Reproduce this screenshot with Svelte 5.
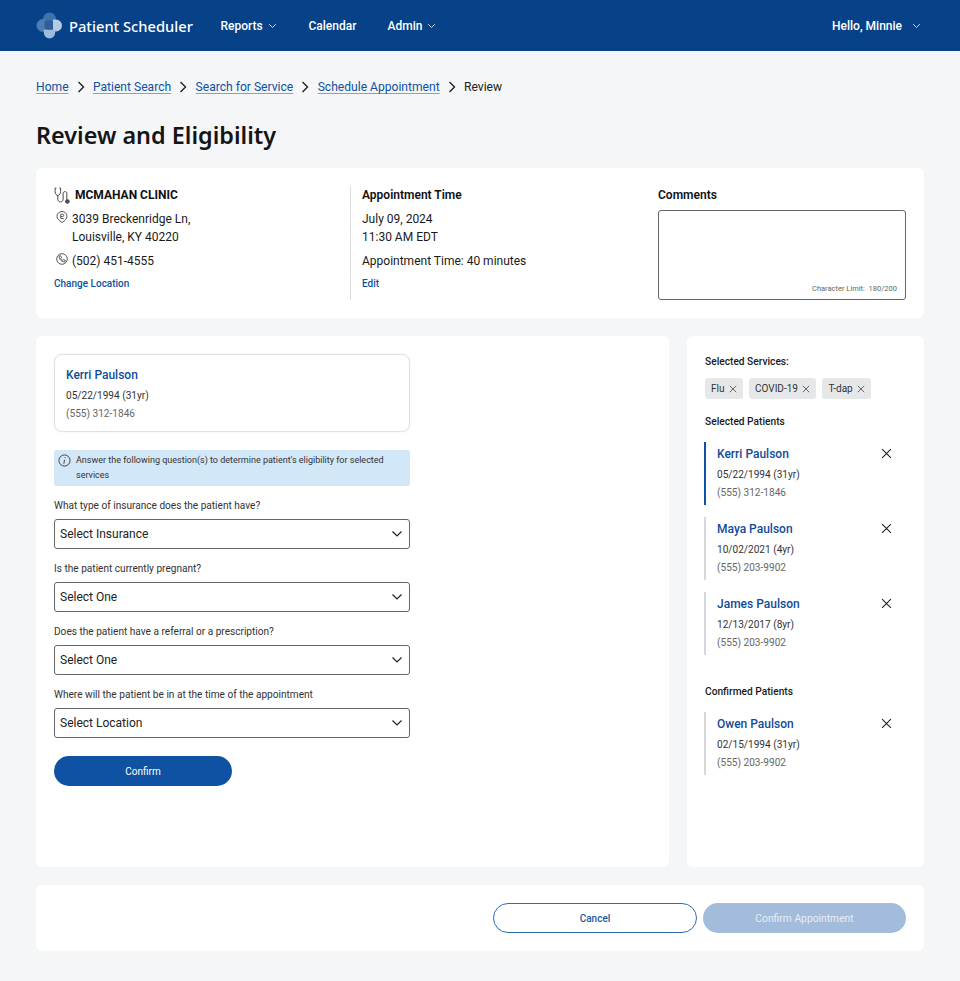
<script>
  const crumbs = ['Home', 'Patient Search', 'Search for Service', 'Schedule Appointment'];
  const questions = [
    ['What type of insurance does the patient have?', 'Select Insurance'],
    ['Is the patient currently pregnant?', 'Select One'],
    ['Does the patient have a referral or a prescription?', 'Select One'],
    ['Where will the patient be in at the time of the appointment', 'Select Location']
  ];
  const services = ['Flu', 'COVID-19', 'T-dap'];
  const selected = [
    { name: 'Kerri Paulson', dob: '05/22/1994 (31yr)', phone: '(555) 312-1846', active: true },
    { name: 'Maya Paulson', dob: '10/02/2021 (4yr)', phone: '(555) 203-9902' },
    { name: 'James Paulson', dob: '12/13/2017 (8yr)', phone: '(555) 203-9902' }
  ];
  const confirmed = [{ name: 'Owen Paulson', dob: '02/15/1994 (31yr)', phone: '(555) 203-9902' }];
</script>

{#snippet chevron(cls)}
  <svg class={cls} viewBox="0 0 12 8" fill="none" stroke="currentColor" stroke-width="1.2"><path d="M1.5 1.5 6 6l4.5-4.5" /></svg>
{/snippet}

{#snippet cross(cls)}
  <svg class={cls} viewBox="0 0 10 10" fill="none" stroke="currentColor" stroke-width="1"><path d="M1 1l8 8M9 1 1 9" /></svg>
{/snippet}

{#snippet person(p)}
  <div class="person" class:active={p.active}>
    <div class="person-text">
      <div class="pname">{p.name}</div>
      <div class="pdob">{p.dob}</div>
      <div class="pphone">{p.phone}</div>
    </div>
    {@render cross('person-x')}
  </div>
{/snippet}

<header class="topbar">
  <div class="brand">
    <svg class="logo" viewBox="0 0 27 27">
      <defs>
        <pattern id="dots" width="2" height="2" patternUnits="userSpaceOnUse"><rect width="2" height="2" fill="#1c4f8e" /><circle cx="1" cy="1" r=".55" fill="#6f97c6" /></pattern>
      </defs>
      <circle cx="13.5" cy="7" r="6.5" fill="#3e72ad" />
      <circle cx="7" cy="13.5" r="6.5" fill="#4c7db5" />
      <path d="M17 7.600h3a6 6 0 0 1 0 12h-3Z" fill="#b4cbe4" />
      <path d="M7.800 17.500h11.400v3a5.700 6 0 0 1-11.400 0Z" fill="#9dbcde" />
      <rect x="8.500" y="8.500" width="8.500" height="9" rx="2" fill="url(#dots)" />
    </svg>
    <span class="brand-name">Patient Scheduler</span>
  </div>
  <nav class="nav">
    <span class="nav-item reports">Reports {@render chevron('nav-chev')}</span>
    <span class="nav-item calendar">Calendar</span>
    <span class="nav-item">Admin {@render chevron('nav-chev')}</span>
  </nav>
  <div class="hello">Hello, Minnie {@render chevron('hello-chev')}</div>
</header>

<main class="page">
  <nav class="crumbs">
    {#each crumbs as c}
      <a href="#top" class="crumb">{c}</a>
      <svg class="crumb-sep" viewBox="0 0 8 12" fill="none" stroke="currentColor" stroke-width="1.4"><path d="M1.5 1 6.5 6l-5 5" /></svg>
    {/each}
    <span class="crumb-cur">Review</span>
  </nav>

  <h1 class="title">Review and Eligibility</h1>

  <section class="card summary">
    <div class="col col-loc">
      <div class="clinic">
        <svg class="ico-steth" viewBox="0 0 16 16" fill="none" stroke="#333" stroke-width=".85"><path d="M2.200 1H1v3.200C1 6.500 2.500 8 3.600 8S6.200 6.500 6.200 4.200V1H5" /><path d="M3.600 8v3.500c0 3.300 5 3.300 5 0V6c0-2.200 3.500-2.200 3.500 0v6" /><circle cx="12.600" cy="13.600" r="1.700" fill="#555" /></svg>
        <strong>MCMAHAN CLINIC</strong>
      </div>
      <div class="addr">
        <svg class="ico" viewBox="0 0 12 12" fill="none" stroke="#333" stroke-width=".8"><path d="M6 11.500C3 9.800 1 7.800 1 5.200a5 4.700 0 0 1 10 0C11 7.800 9 9.800 6 11.500Z" /><path d="M4.700 3.200h1.800a1.100 1.100 0 0 1 0 2.400H4.700m0-2.400v4l3 .5" /></svg>
        <div>3039 Breckenridge Ln,<br />Louisville, KY 40220</div>
      </div>
      <div class="tel">
        <svg class="ico" viewBox="0 0 12 12" fill="none" stroke="#333" stroke-width=".8"><circle cx="6" cy="6" r="5.300" /><path d="M3.200 3 4.700 2.700l.8 1.700-.8.9c.4.900 1.100 1.600 2 2l.9-.8 1.700.8L9 8.800C6 9.300 2.700 6 3.200 3Z" /></svg>
        (502) 451-4555
      </div>
      <a href="#top" class="small-link">Change Location</a>
    </div>
    <div class="col col-time">
      <h3 class="col-h">Appointment Time</h3>
      <div class="time-lines">July 09, 2024<br />11:30 AM EDT</div>
      <div class="duration">Appointment Time: 40 minutes</div>
      <a href="#top" class="small-link">Edit</a>
    </div>
    <div class="col col-comments">
      <h3 class="col-h">Comments</h3>
      <div class="comment-box"><span class="limit">Character Limit:&nbsp; 180/200</span></div>
    </div>
  </section>

  <div class="split">
    <section class="card form">
      <div class="pcard">
        <div class="pname">Kerri Paulson</div>
        <div class="pdob">05/22/1994 (31yr)</div>
        <div class="pphone">(555) 312-1846</div>
      </div>
      <div class="notice">
        <svg class="info" viewBox="0 0 14 14" fill="none" stroke="#222" stroke-width=".9"><circle cx="7" cy="7" r="6" /><path d="M7.600 3.500v1M7 6.200 6.300 10.500" /></svg>
        <p>Answer the following question(s) to determine patient's eligibility for selected services</p>
      </div>
      {#each questions as q}
        <div class="field">
          <div class="qlabel">{q[0]}</div>
          <div class="select"><span>{q[1]}</span>{@render chevron('select-chev')}</div>
        </div>
      {/each}
      <button class="btn-primary">Confirm</button>
    </section>

    <aside class="card side">
      <h4 class="side-h">Selected Services:</h4>
      <div class="chips">
        {#each services as s}
          <span class="chip">{s} {@render cross('chip-x')}</span>
        {/each}
      </div>
      <h4 class="side-h patients-h">Selected Patients</h4>
      <div class="people">
        {#each selected as p}
          {@render person(p)}
        {/each}
      </div>
      <h4 class="side-h confirmed-h">Confirmed Patients</h4>
      <div class="people">
        {#each confirmed as p}
          {@render person(p)}
        {/each}
      </div>
    </aside>
  </div>

  <section class="card footer">
    <button class="btn-outline">Cancel</button>
    <button class="btn-disabled">Confirm Appointment</button>
  </section>
</main>

<style>
  :global(body) {
    margin: 0;
    background: #f4f6f8;
    font-family: Roboto, "Liberation Sans", sans-serif;
    color: #1a1a1a;
  }
  .topbar {
    height: 51px;
    background: #074187;
    color: #fff;
    display: flex;
    align-items: center;
    padding: 0 36px;
    box-sizing: border-box;
  }
  .brand { display: flex; align-items: center; gap: 6px; width: 184.500px; }
  .logo { width: 27px; height: 27px; flex: none; }
  .brand-name { font-family: "Noto Sans", sans-serif; font-size: 14.700px; font-weight: 500; white-space: nowrap; }
  .nav { display: flex; align-items: center; font-size: 12px; font-weight: 500; }
  .nav-item { display: inline-flex; align-items: center; gap: 5px; }
  .reports { width: 88px; }
  .calendar { width: 79px; }
  .nav-chev { width: 9px; height: 6px; color: #dbe5f1; }
  .hello { margin-left: auto; display: flex; align-items: center; gap: 10px; font-size: 12px; font-weight: 500; padding-right: 3px; }
  .hello-chev { width: 9px; height: 6px; color: #dbe5f1; }

  .page { padding: 0 36px 30px; }
  .crumbs { display: flex; align-items: center; height: 18px; margin-top: 27px; font-size: 12.100px; }
  .crumb { color: #0f52a0; text-decoration: underline; text-decoration-color: #7ea3cf; text-underline-offset: 2px; }
  .crumb-sep { width: 8px; height: 12px; margin: 0 8.200px; color: #222; }
  .crumb-cur { color: #222; }
  .title { font-family: "Noto Sans", sans-serif; font-size: 23.400px; font-weight: 600; line-height: 32px; margin: 23px 0 17px; color: #151515; }

  .card { background: #fff; border-radius: 6px; box-sizing: border-box; }
  .summary { height: 150px; padding: 18px; display: flex; }
  .col { box-sizing: border-box; font-size: 12px; }
  .col-loc { width: 297px; border-right: 1px solid #dcdee2; height: 114px; }
  .col-time { width: 307px; padding-left: 11px; }
  .col-comments { width: 248px; }
  .clinic { display: flex; align-items: center; gap: 4px; height: 18px; }
  .clinic strong { font-size: 12px; font-weight: 700; color: #111; }
  .ico-steth { width: 17px; height: 17px; flex: none; }
  .addr { display: flex; gap: 4px; margin: 6px 0 0 2px; line-height: 18px; }
  .ico { width: 12px; height: 12px; flex: none; margin-top: 1px; }
  .tel { display: flex; gap: 4px; margin: 6px 0 0 2px; line-height: 18px; align-items: flex-start; }
  .small-link { display: block; color: #0f52a0; font-size: 10px; font-weight: 500; text-decoration: none; line-height: 14px; margin-top: 7px; }
  .col-h { font-size: 12px; font-weight: 600; line-height: 18px; margin: 0; color: #111; }
  .time-lines { line-height: 18px; margin-top: 6px; }
  .duration { line-height: 18px; margin-top: 6px; }
  .comment-box { position: relative; height: 90px; margin-top: 6px; border: 1px solid #666; border-radius: 3px; box-sizing: border-box; }
  .limit { position: absolute; right: 8px; bottom: 6px; font-size: 7.500px; color: #666; }

  .split { display: flex; gap: 18px; margin-top: 18px; }
  .form { width: 633px; height: 531px; padding: 18px; }
  .pcard { width: 356px; height: 78px; box-sizing: border-box; border: 1px solid #e0e1e4; border-radius: 8px; padding: 12px 11px; box-shadow: 0 0 2px #e9eaec; }
  .pname { font-size: 12px; font-weight: 500; color: #0f4c98; line-height: 17px; }
  .pdob { font-size: 10.100px; color: #333; line-height: 18px; margin-top: 3px; }
  .pphone { font-size: 10.100px; color: #666; line-height: 18px; }
  .notice { width: 356px; height: 36px; margin-top: 18px; background: #d2e7f8; border-radius: 2px; display: flex; gap: 5px; padding: 3px 0 0 4px; box-sizing: border-box; }
  .info { width: 13px; height: 13px; flex: none; margin-top: 1px; }
  .notice p { margin: 0; font-size: 9px; line-height: 15px; color: #333; width: 320px; }
  .field { width: 356px; }
  .field + .field { margin-top: 11px; }
  .notice + .field { margin-top: 11px; }
  .qlabel { font-size: 10.100px; line-height: 18px; color: #333; margin-bottom: 4px; }
  .select { height: 30px; box-sizing: border-box; border: 1px solid #666; border-radius: 3px; display: flex; align-items: center; justify-content: space-between; padding: 0 6px 0 5px; font-size: 12px; color: #222; background: #fff; }
  .select-chev { width: 12px; height: 8px; color: #222; }
  .btn-primary { display: block; width: 178px; height: 30px; margin-top: 18px; border: 0; border-radius: 15px; background: #0f52a3; color: #fff; font: 400 10px Roboto, sans-serif; }

  .side { width: 237px; height: 531px; padding: 19px 18px 18px; }
  .side-h { font-size: 10.200px; font-weight: 500; line-height: 14px; margin: 0; color: #1a1a1a; }
  .chips { display: flex; gap: 6px; margin-top: 9px; }
  .chip { display: inline-flex; align-items: center; gap: 4.500px; height: 21px; padding: 0 6px; border-radius: 3px; background: #e6e7e9; font-size: 10px; color: #333; }
  .chip-x { width: 8px; height: 8px; color: #444; }
  .patients-h { margin-top: 16px; }
  .people { display: flex; flex-direction: column; gap: 12px; margin-top: 13px; margin-left: -1px; }
  .person { position: relative; display: flex; height: 63px; border-left: 2px solid #d5d7da; padding-left: 11px; box-sizing: border-box; width: 190px; justify-content: space-between; }
  .person.active { border-left-color: #0f52a3; }
  .person .pname { margin-top: 4px; line-height: 17px; }
  .person .pdob { margin-top: 3px; }
  .person-x { width: 11px; height: 11px; color: #222; margin: 5.500px 2.500px 0 0; }
  .confirmed-h { margin-top: 30px; }

  .footer { height: 66px; margin-top: 18px; padding: 18px; display: flex; justify-content: flex-end; gap: 6px; }
  .btn-outline { width: 204px; height: 30px; border: 1px solid #2e6cb0; border-radius: 15px; background: #fff; color: #1a5aa5; font: 500 10px Roboto, sans-serif; }
  .btn-disabled { width: 203px; height: 30px; border: 0; border-radius: 15px; background: #a3bcdb; color: #e6edf5; font: 400 10.300px Roboto, sans-serif; }
</style>
